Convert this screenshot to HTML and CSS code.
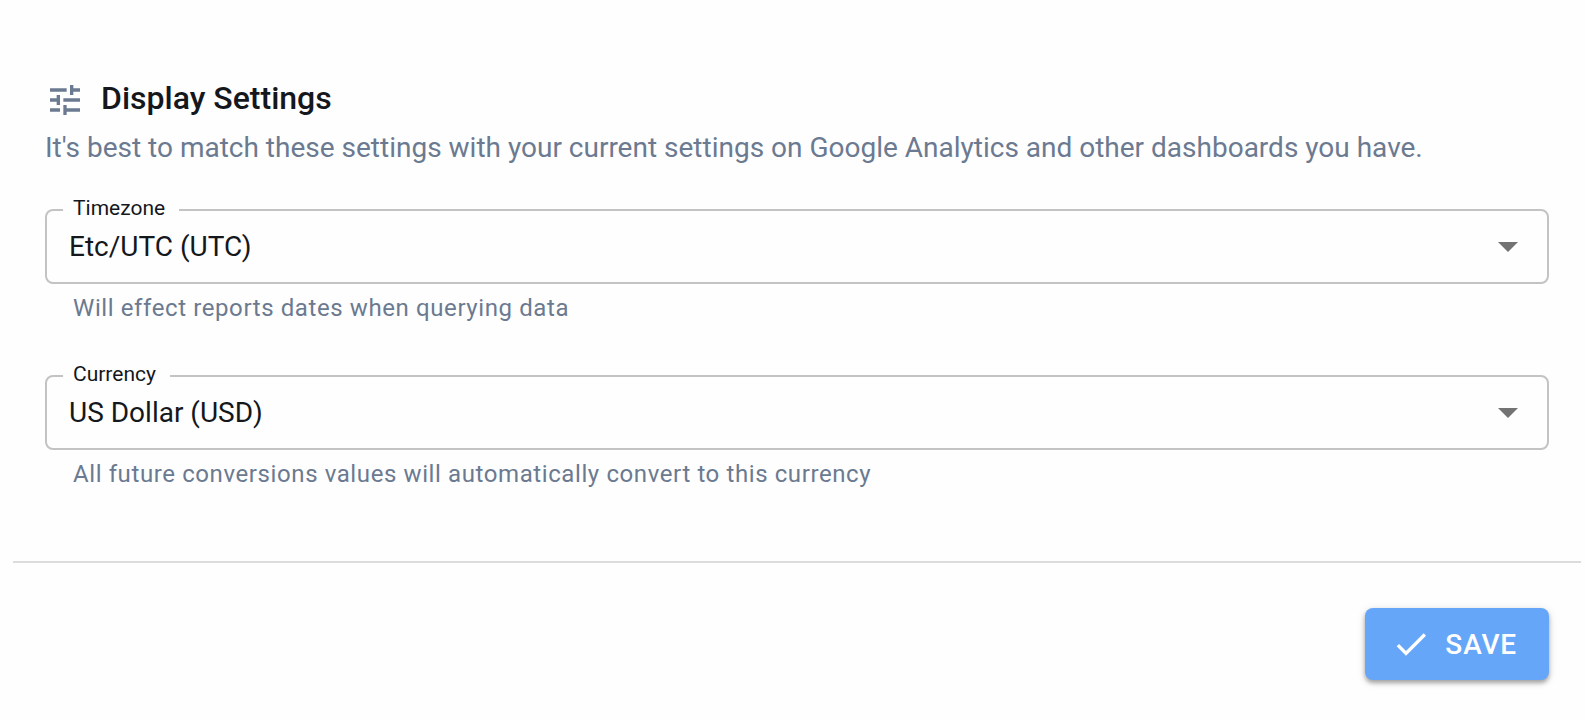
FILE: index.html
```html
<!DOCTYPE html>
<html lang="en">
<head>
    <meta charset="UTF-8">
    <meta name="viewport" content="width=device-width, initial-scale=1.0">
    <title>Display Settings</title>
    <link rel="stylesheet" href="styles.css">
</head>
<body>
    <form class="settings">
        <div class="content">
            <h1>
                <svg class="tune-icon" viewBox="0 0 24 24" aria-hidden="true">
                    <path d="M3 17v2h6v-2H3zM3 5v2h10V5H3zm10 16v-2h8v-2h-8v-2h-2v6h2zM7 9v2H3v2h4v2h2V9H7zm14 4v-2H11v2h10zm-6-4h2V7h4V5h-4V3h-2v6z"/>
                </svg>
                Display Settings
            </h1>
            <p class="intro">It's best to match these settings with your current settings on Google Analytics and other dashboards you have.</p>

            <div class="field">
                <div class="select-box">
                    <label for="timezone">Timezone</label>
                    <select id="timezone" name="timezone" aria-describedby="timezone-help">
                        <option>Etc/UTC (UTC)</option>
                    </select>
                    <svg class="arrow" viewBox="0 0 20 10" aria-hidden="true"><path d="M0 0l10 10L20 0z"/></svg>
                </div>
                <p class="help" id="timezone-help">Will effect reports dates when querying data</p>
            </div>

            <div class="field">
                <div class="select-box">
                    <label for="currency">Currency</label>
                    <select id="currency" name="currency" aria-describedby="currency-help">
                        <option>US Dollar (USD)</option>
                    </select>
                    <svg class="arrow" viewBox="0 0 20 10" aria-hidden="true"><path d="M0 0l10 10L20 0z"/></svg>
                </div>
                <p class="help" id="currency-help">All future conversions values will automatically convert to this currency</p>
            </div>
        </div>

        <div class="actions">
            <button type="submit">
                <svg class="check-icon" viewBox="0 0 24 24" aria-hidden="true">
                    <path d="M9 16.17L4.83 12l-1.42 1.41L9 19 21 7l-1.41-1.41z"/>
                </svg>
                Save
            </button>
        </div>
    </form>
</body>
</html>
```

FILE: styles.css
```css
* {
    box-sizing: border-box;
}
body {
    font-family: Roboto, Arial, sans-serif;
    font-size: 28px;
    margin: 0;
    background-color: #fefefe;
    color: #14171c;
}
.settings {
    margin: 0 5px 0 13px;
}
.content {
    padding: 76px 32px 67px;
}
h1 {
    display: flex;
    align-items: flex-end;
    gap: 16px;
    margin: 0;
    font-size: 32px;
    font-weight: 500;
    line-height: 44px;
}
.tune-icon {
    width: 40px;
    height: 40px;
    fill: #6b7a90;
}
.intro {
    margin: 8px 0 41px;
    line-height: 40px;
    color: #6b7a90;
}
.field + .field {
    margin-top: 47px;
}
.select-box {
    position: relative;
}
.select-box label {
    position: absolute;
    top: -13px;
    left: 18px;
    padding: 0 14px 0 10px;
    background-color: #fefefe;
    font-size: 21px;
    line-height: 24px;
}
.select-box select {
    display: block;
    width: 100%;
    height: 75px;
    padding: 0 64px 0 22px;
    border: 2px solid #c3c3c3;
    border-radius: 8px;
    background: none;
    color: inherit;
    font: inherit;
    appearance: none;
}
.arrow {
    position: absolute;
    top: 33px;
    right: 31px;
    width: 20px;
    height: 10px;
    fill: #737373;
    pointer-events: none;
}
.help {
    margin: 4px 28px 0;
    font-size: 24px;
    line-height: 40px;
    color: #6b7a90;
    letter-spacing: 0.025em;
}
.actions {
    display: flex;
    justify-content: flex-end;
    padding: 45px 32px 40px;
    border-top: 2px solid #dcdcdc;
}
button {
    display: flex;
    align-items: center;
    gap: 14px;
    height: 72px;
    padding: 0 32px 0 26px;
    border: none;
    border-radius: 8px;
    background-color: #66a6f8;
    box-shadow: 0 3px 4px rgba(0, 0, 0, 0.3), 0 2px 10px rgba(0, 0, 0, 0.12);
    color: #fff;
    font: inherit;
    font-weight: 500;
    letter-spacing: 0.03em;
    text-transform: uppercase;
    cursor: pointer;
}
button:hover {
    background-color: #5496ec;
}
.check-icon {
    width: 40px;
    height: 40px;
    fill: #fff;
}
```
